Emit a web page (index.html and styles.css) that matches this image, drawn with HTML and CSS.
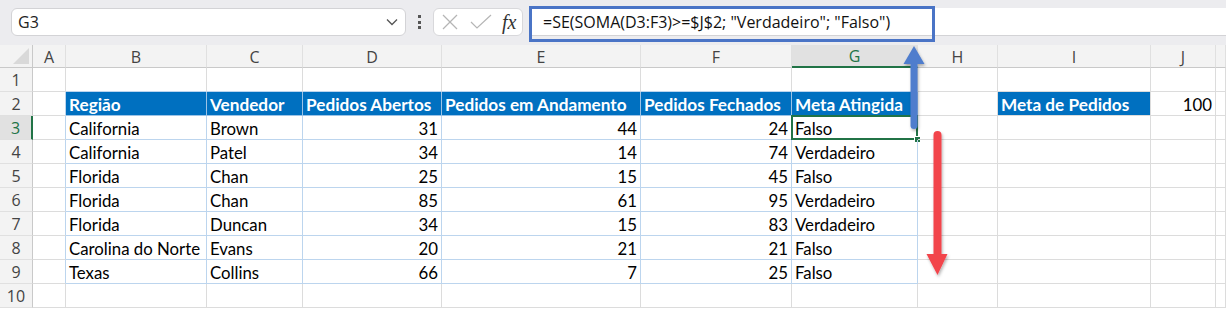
FILE: index.html
```html
<!DOCTYPE html>
<html lang="pt">
<head>
    <meta charset="UTF-8">
    <title>Meta Atingida</title>
    <link rel="stylesheet" href="styles.css">
</head>
<body>
    <div class="toolbar">
        <div class="name-box">
            <span>G3</span>
            <svg class="chevron" width="12" height="8" viewBox="0 0 12 8">
                <polyline points="1 1.5 6 6.5 11 1.5" fill="none" stroke="#555" stroke-width="1.3"></polyline>
            </svg>
        </div>
        <div class="grip"><i></i><i></i><i></i></div>
        <div class="fx-box">
            <svg width="16" height="16" viewBox="0 0 16 16">
                <line x1="1" y1="1" x2="15" y2="15" stroke="#b5b5b5" stroke-width="1.2"></line>
                <line x1="15" y1="1" x2="1" y2="15" stroke="#b5b5b5" stroke-width="1.2"></line>
            </svg>
            <svg width="22" height="16" viewBox="0 0 22 16">
                <polyline points="1 8 7 14 21 1" fill="none" stroke="#b5b5b5" stroke-width="1.2"></polyline>
            </svg>
            <span class="fx">fx</span>
        </div>
        <div class="formula">
            <span>=SE(SOMA(D3:F3)&gt;=$J$2; "Verdadeiro"; "Falso")</span>
            <div class="formula-mark"></div>
        </div>
    </div>

    <div class="sheet" id="sheet"></div>

    <svg class="arrows" width="1226" height="310" viewBox="0 0 1226 310">
        <defs>
            <filter id="shadow" x="-50%" y="-10%" width="200%" height="120%">
                <feDropShadow dx="1" dy="2" stdDeviation="1.5" flood-color="#000" flood-opacity="0.3"></feDropShadow>
            </filter>
        </defs>
        <g filter="url(#shadow)" fill="#4f7dcd">
            <rect x="910.5" y="58" width="7" height="71" rx="3.5"></rect>
            <polygon points="914 46 903.5 64 924.5 64"></polygon>
        </g>
        <g filter="url(#shadow)" fill="#f2444c">
            <rect x="933.5" y="131" width="8" height="130" rx="4"></rect>
            <polygon points="926.5 254 947.5 254 937.5 275"></polygon>
        </g>
    </svg>

    <script>
        document.addEventListener('DOMContentLoaded', function() {
            const sheet = document.getElementById('sheet');
            // K is cut off by the window edge, so its letter is not shown
            const letters = ['A', 'B', 'C', 'D', 'E', 'F', 'G', 'H', 'I', 'J', ''];

            const headers = ['Região', 'Vendedor', 'Pedidos Abertos', 'Pedidos em Andamento', 'Pedidos Fechados', 'Meta Atingida'];
            const rows = [
                ['California', 'Brown', 31, 44, 24, 'Falso'],
                ['California', 'Patel', 34, 14, 74, 'Verdadeiro'],
                ['Florida', 'Chan', 25, 15, 45, 'Falso'],
                ['Florida', 'Chan', 85, 61, 95, 'Verdadeiro'],
                ['Florida', 'Duncan', 34, 15, 83, 'Verdadeiro'],
                ['Carolina do Norte', 'Evans', 20, 21, 21, 'Falso'],
                ['Texas', 'Collins', 66, 7, 25, 'Falso']
            ];

            function addCell(text, classes) {
                const cell = document.createElement('div');
                cell.className = 'cell ' + classes;
                if (text !== '') {
                    const span = document.createElement('span');
                    span.textContent = text;
                    cell.appendChild(span);
                }
                sheet.appendChild(cell);
                return cell;
            }

            // Column headers
            addCell('', 'corner');
            letters.forEach(function(letter) {
                addCell(letter, 'col-head' + (letter === 'G' ? ' active' : ''));
            });

            // Rows 1 to 10
            for (let r = 1; r <= 10; r++) {
                addCell(r, 'row-head' + (r === 3 ? ' active' : ''));

                for (let c = 0; c < letters.length; c++) {
                    let text = '';
                    let cls = '';
                    const inTable = c >= 1 && c <= 6;

                    if (r === 2 && inTable) {
                        text = headers[c - 1];
                        cls = 'th';
                    } else if (r >= 3 && r <= 9 && inTable) {
                        text = rows[r - 3][c - 1];
                        cls = 'tb' + (c >= 3 && c <= 5 ? ' num' : '');
                    } else if (r === 2 && c === 8) {
                        text = 'Meta de Pedidos';
                        cls = 'th solo';
                    } else if (r === 2 && c === 9) {
                        text = 100;
                        cls = 'num';
                    }

                    if (c === 0 && r >= 2 && r <= 9) cls += ' edge';
                    if (r === 1 && inTable) cls += ' top-edge';

                    const cell = addCell(text, cls);

                    if (r === 3 && c === 6) {
                        cell.classList.add('selected');
                        const box = document.createElement('div');
                        box.className = 'selection';
                        const handle = document.createElement('div');
                        handle.className = 'fill-handle';
                        cell.appendChild(box);
                        cell.appendChild(handle);
                    }
                }
            }
        });
    </script>
</body>
</html>
```

FILE: styles.css
```css
* {
    margin: 0;
    padding: 0;
    box-sizing: border-box;
}

html, body {
    width: 100%;
    height: 100%;
    overflow: hidden;
    background-color: #fff;
}

body {
    position: relative;
    font-family: 'Open Sans', 'Noto Sans', sans-serif;
}

/* Formula bar area */
.toolbar {
    display: flex;
    align-items: flex-start;
    height: 45px;
    padding: 8px 0 0 11px;
    background-color: #ececef;
}

.name-box {
    display: flex;
    align-items: center;
    justify-content: space-between;
    width: 395px;
    height: 28px;
    padding: 0 7px 0 6px;
    background-color: #fff;
    border: 1px solid #d3d3d6;
    border-radius: 6px;
    font-size: 16px;
    color: #222;
}

.grip {
    display: flex;
    flex-direction: column;
    align-items: center;
    justify-content: center;
    gap: 2.5px;
    width: 27px;
    height: 28px;
}

.grip i {
    display: block;
    width: 3px;
    height: 3px;
    background-color: #555;
}

.fx-box {
    display: flex;
    align-items: center;
    gap: 12px;
    width: 90px;
    height: 28px;
    padding-left: 8px;
    background-color: #fff;
    border: 1px solid #d8d8db;
    border-radius: 6px;
}

.fx {
    font-family: 'Liberation Serif', serif;
    font-style: italic;
    font-size: 20px;
    color: #333;
    margin-left: -2px;
}

.formula {
    position: relative;
    flex: 1;
    display: flex;
    align-items: center;
    height: 28px;
    margin-left: 7px;
    padding-left: 13px;
    background-color: #fff;
    border-bottom: 1px solid #d3d3d6;
    font-size: 16px;
    color: #111;
}

.formula-mark {
    position: absolute;
    left: -1px;
    top: -2px;
    width: 406px;
    height: 36px;
    border: 3px solid #4a74c6;
}

/* Grid */
.sheet {
    display: grid;
    grid-template-columns: 33px 33px 141px 96px 139px 199px 151px 126px 80px 153px 65px 1fr;
    grid-template-rows: 23px repeat(10, 24px);
    font-family: Lato, 'Open Sans', sans-serif;
    font-size: 16.8px;
    color: #000;
}

.cell {
    position: relative;
    display: flex;
    align-items: center;
    padding: 1px 3px 0 3px;
    border-right: 1px solid #dcdcdc;
    border-bottom: 1px solid #dcdcdc;
    white-space: nowrap;
    overflow: visible;
}

.corner,
.col-head,
.row-head {
    background-color: #f3f3f3;
    font-family: 'Open Sans', sans-serif;
    font-size: 16px;
    color: #444;
    justify-content: center;
}

.corner {
    border-right: 1px solid #c9c9c9;
    border-bottom: 1px solid #c9c9c9;
}

.corner::after {
    content: '';
    position: absolute;
    right: 3px;
    bottom: 3px;
    border-left: 16px solid transparent;
    border-bottom: 16px solid #d9d9d9;
}

.col-head {
    border-bottom: 1px solid #c9c9c9;
    border-right: 1px solid #e0e0e0;
}

.row-head {
    border-right: 1px solid #c9c9c9;
    border-bottom: 1px solid #e0e0e0;
}

.col-head.active {
    background-color: #e1e1e1;
    color: #217346;
    border-bottom: 2px solid #217346;
}

.row-head.active {
    background-color: #e1e1e1;
    color: #217346;
    border-right: 2px solid #217346;
}

.th {
    background-color: #0070c0;
    color: #fff;
    font-weight: bold;
    font-size: 17.2px;
    border-right: 1px solid #9cc3e6;
    border-bottom: 1px solid #9cc3e6;
}

.th.solo {
    border-right-color: #dcdcdc;
    border-bottom-color: #dcdcdc;
}

.tb {
    border-right: 1px solid #bcd5ee;
    border-bottom: 1px solid #bcd5ee;
}

.edge {
    border-right: 1px solid #bcd5ee;
}

.top-edge {
    border-bottom: 1px solid #bcd5ee;
}

.num {
    justify-content: flex-end;
}

/* Active cell */
.selection {
    position: absolute;
    left: -1px;
    top: -1px;
    right: -1px;
    bottom: -1px;
    border: 2px solid #217346;
}

.fill-handle {
    position: absolute;
    right: -4px;
    bottom: -4px;
    width: 7px;
    height: 7px;
    background-color: #217346;
    border: 1px solid #fff;
}

.arrows {
    position: absolute;
    left: 0;
    top: 0;
    pointer-events: none;
}
```
